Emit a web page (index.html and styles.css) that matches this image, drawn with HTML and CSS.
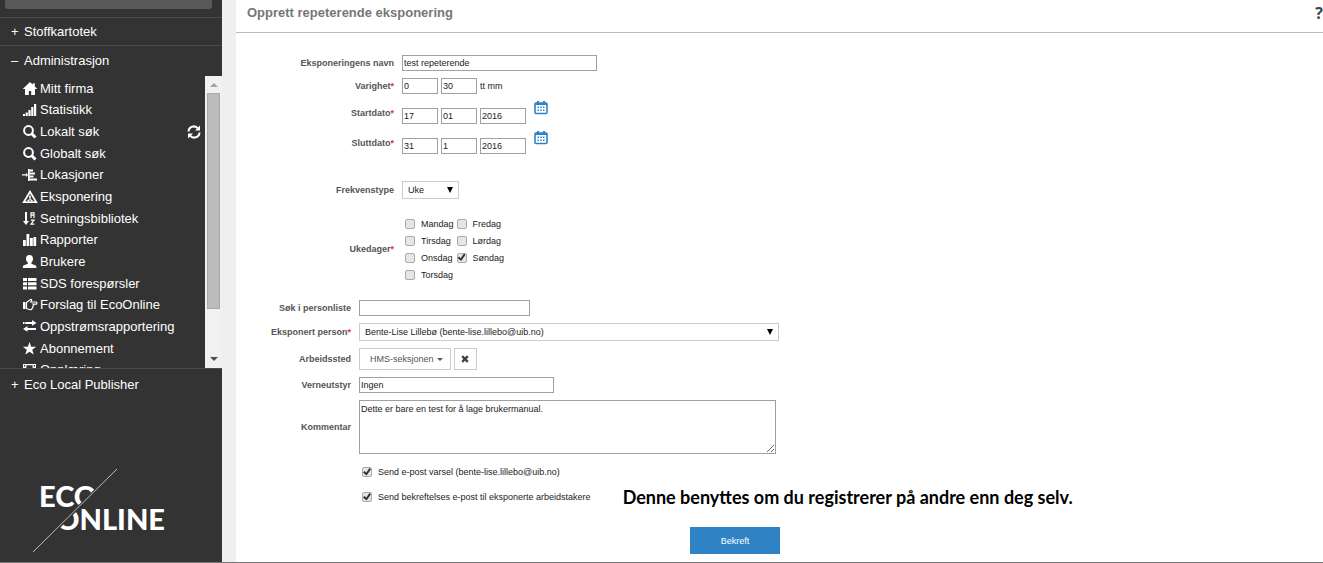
FILE: index.html
```
<!DOCTYPE html>
<html lang="no">
<head>
<meta charset="utf-8">
<title>Opprett repeterende eksponering</title>
<link rel="stylesheet" href="styles.css">
</head>
<body>
<div class="app">
  <aside class="sidebar">
    <div class="search-stub"></div>
    <button class="section" type="button"><span class="sign">+</span>Stoffkartotek</button>
    <button class="section section-open" type="button"><span class="sign">–</span>Administrasjon</button>
    <div class="scroller">
      <ul class="menu">
        <li><a href="#"><svg class="ico" viewBox="0 0 14 14"><path d="M7 0-.3 7H2v6h3.800V9h2.400v4H12V7h2.300L11.800 4.600V1.200H9.800v1.500z"/></svg>Mitt firma</a></li>
        <li><a href="#"><svg class="ico" viewBox="0 0 14 14"><path d="M0 11h2v2H0zM2.600 9.500h2.200V13H2.600zM5.400 7h2.200v6H5.400zM8.200 4h2.200v9H8.200zM11 1h2.200v12H11z"/></svg>Statistikk</a></li>
        <li><a href="#"><svg class="ico" viewBox="0 0 14 14"><path class="line" d="M8.500 8.500 12.500 12.500"/><circle class="ring" cx="5.500" cy="5.500" r="4.400"/></svg>Lokalt søk</a>
          <svg class="ico refresh" viewBox="0 0 14 14"><path class="ring" d="M1.500 6.500a5.300 5.300 0 0 1 9.500-3M12.500 7.500a5.300 5.300 0 0 1-9.500 3"/><path d="M13 .5v5H8zM1 13.500v-5h5z"/></svg></li>
        <li><a href="#"><svg class="ico" viewBox="0 0 14 14"><path class="line" d="M8.500 8.500 12.500 12.500"/><circle class="ring" cx="5.500" cy="5.500" r="4.400"/></svg>Globalt søk</a></li>
        <li><a href="#"><svg class="ico" viewBox="0 0 14 14"><path d="M-1 6.200h4V4.700l2 2.200-2 2.200V7.500h-4zM5 1h1.500v12H5zM6.500 1.500H10v2H6.500zM6.500 4.500H12v2H6.500zM6.500 7.500h4v2h-4zM6.500 10.500H14v2H6.500z"/></svg>Lokasjoner</a></li>
        <li><a href="#"><svg class="ico" viewBox="0 0 14 14"><path fill-rule="evenodd" d="M7 0l7.800 13H-.8zM7 3.400 2.300 11.300h9.400zM6.200 5.500h1.600v3.200H6.200zM3.800 11l2-1.800h2.400l2 1.800H8L7 10l-1 1z"/></svg>Eksponering</a></li>
        <li><a href="#"><svg class="ico" viewBox="0 0 14 14"><path d="M2 0h2v9h2l-3 4-3-4h2z"/><path class="thin" d="M8 6V.8h3V6M8 3.200h3M7.800 8.200H11l-3 4h3.400"/></svg>Setningsbibliotek</a></li>
        <li><a href="#"><svg class="ico" viewBox="0 0 14 14"><path d="M0 7h2.800v6H0zM3.500 1h2.800v12H3.500zM7 5h2.800v8H7zM10.400 4h2.800v9h-2.800z"/></svg>Rapporter</a></li>
        <li><a href="#"><svg class="ico" viewBox="0 0 14 14"><path d="M6.500 0c2.400 0 3.500 1.600 3.500 3.700 0 1.600-.6 2.900-1.600 3.800v1.200l4.300 1.700c.5.300.7.800.7 2.600H-.2c0-1.800.2-2.300.7-2.600l4.300-1.700V7.500C3.700 6.600 3 5.300 3 3.700 3 1.600 4.100 0 6.500 0z"/></svg>Brukere</a></li>
        <li><a href="#"><svg class="ico" viewBox="0 0 14 14"><path d="M0 1h4v3H0zM5 1h8.500v3H5zM0 5.200h4v3H0zM5 5.200h8.500v3H5zM0 9.400h4v3H0zM5 9.400h8.500v3H5z"/></svg>SDS forespørsler</a></li>
        <li><a href="#"><svg class="ico" viewBox="0 0 14 14"><path d="M0 4h2.500v7H0z"/><path class="thin" d="M3.500 4.500 7.500 1.500c1.500-.3 1.500 1 .3 2.500H13c1.200 0 1.200 2.200 0 2.200h-3c1 1 .8 1.800-.3 2.200.4 1 .1 1.700-.7 2 0 1-.5 1.300-1.500 1.300-1.500 0-2.500-.7-4-1.200z"/></svg>Forslag til EcoOnline</a></li>
        <li><a href="#"><svg class="ico" viewBox="0 0 14 14"><path d="M0 1.900h1.500v2H0zM2.200 1.900H9V0l4.500 2.900L9 5.800V3.900H2.200zM13 7.900H4.500V6L0 8.900l4.500 2.900V9.900H13z"/></svg>Oppstrømsrapportering</a></li>
        <li><a href="#"><svg class="ico" viewBox="0 0 14 14"><path d="m6.500 0 1.700 4.700h5L9.200 7.800l1.500 4.800-4.200-2.900-4.200 2.900 1.500-4.800L-.2 4.700h5z"/></svg>Abonnement</a></li>
        <li><a href="#"><svg class="ico" viewBox="0 0 14 14"><path fill-rule="evenodd" d="M0 1h13v11H0zM1 2v1.500h1.200V2zM1 5v1.500h1.200V5zM3.400 2.200v4h6.200v-4zM10.800 2v1.500H12V2zM10.800 5v1.500H12V5zM3.400 7.200v4h6.200v-4z"/></svg>Opplæring</a></li>
      </ul>
      <div class="bar">
        <span class="up"></span>
        <span class="thumb"></span>
        <span class="down"></span>
      </div>
    </div>
    <button class="section section-last" type="button"><span class="sign">+</span>Eco Local Publisher</button>
    <svg class="logo" viewBox="0 0 140 86" role="img" aria-label="EcoOnline">
      <defs>
        <clipPath id="upper"><path d="M0 0H84L0 83z"/></clipPath>
        <clipPath id="lower"><path d="M88 0H140V86H2z"/></clipPath>
      </defs>
      <text x="7" y="39" clip-path="url(#upper)">ECO</text>
      <text x="24" y="62" clip-path="url(#lower)">ONLINE</text>
      <path class="slash" d="M1 84 85 1"/>
    </svg>
  </aside>

  <main class="main">
    <header class="head">
      <h1>Opprett repeterende eksponering</h1>
      <a class="help" href="#">?</a>
    </header>
    <form class="form">
      <div class="row">
        <label class="lab" for="navn">Eksponeringens navn</label>
        <input class="txt name" id="navn" value="test repeterende">
      </div>
      <div class="row">
        <label class="lab" for="timer">Varighet<i>*</i></label>
        <div class="parts">
          <input class="txt short" id="timer" value="0">
          <input class="txt short" aria-label="Minutter" value="30">
          <span>tt mm</span>
        </div>
      </div>
      <div class="row date">
        <label class="lab" for="start">Startdato<i>*</i></label>
        <div class="parts">
          <input class="txt short" id="start" value="17">
          <input class="txt short" aria-label="Startmåned" value="01">
          <input class="txt year" aria-label="Startår" value="2016">
        </div>
        <button class="cal" type="button" aria-label="Velg startdato"><svg viewBox="0 0 14 14"><rect class="frame" x="1" y="2" width="12" height="10.500" rx="1"/><path d="M1 2h12v2H1zM3 0h2v3H3zM9 0h2v3H9zM3.500 5.500H5V7H3.500zM6.300 5.500h1.500V7H6.300zM9 5.500h1.500V7H9zM3.500 8.500H5V10H3.500zM6.300 8.500h1.500V10H6.300zM9 8.500h1.500V10H9z"/></svg></button>
      </div>
      <div class="row date">
        <label class="lab" for="slutt">Sluttdato<i>*</i></label>
        <div class="parts">
          <input class="txt short" id="slutt" value="31">
          <input class="txt short" aria-label="Sluttmåned" value="1">
          <input class="txt year" aria-label="Sluttår" value="2016">
        </div>
        <button class="cal" type="button" aria-label="Velg sluttdato"><svg viewBox="0 0 14 14"><rect class="frame" x="1" y="2" width="12" height="10.500" rx="1"/><path d="M1 2h12v2H1zM3 0h2v3H3zM9 0h2v3H9zM3.500 5.500H5V7H3.500zM6.300 5.500h1.500V7H6.300zM9 5.500h1.500V7H9zM3.500 8.500H5V10H3.500zM6.300 8.500h1.500V10H6.300zM9 8.500h1.500V10H9z"/></svg></button>
      </div>
      <div class="row freq">
        <label class="lab" for="frekvens">Frekvenstype</label>
        <div class="pick pick-small">
          <select id="frekvens"><option>Uke</option></select>
          <svg viewBox="0 0 6 6"><path d="M0 0h6L3 6z"/></svg>
        </div>
      </div>
      <div class="row week">
        <span class="lab" id="dager">Ukedager<i>*</i></span>
        <div class="days" role="group" aria-labelledby="dager">
          <label><input type="checkbox">Mandag</label>
          <label><input type="checkbox">Tirsdag</label>
          <label><input type="checkbox">Onsdag</label>
          <label><input type="checkbox">Torsdag</label>
          <label><input type="checkbox">Fredag</label>
          <label><input type="checkbox">Lørdag</label>
          <label><input type="checkbox" checked>Søndag</label>
        </div>
      </div>

      <div class="details">
        <div class="row">
          <label class="lab" for="sok">Søk i personliste</label>
          <input class="txt search" id="sok">
        </div>
        <div class="row">
          <label class="lab" for="person">Eksponert person<i>*</i></label>
          <div class="pick pick-wide">
            <select id="person"><option>Bente-Lise Lillebø (bente-lise.lillebo@uib.no)</option></select>
            <svg viewBox="0 0 6 6"><path d="M0 0h6L3 6z"/></svg>
          </div>
        </div>
        <div class="row">
          <label class="lab" for="sted">Arbeidssted</label>
          <div class="parts">
            <button class="flat" id="sted" type="button">HMS-seksjonen<span class="caret"></span></button>
            <button class="flat clear" type="button" aria-label="Fjern"><svg viewBox="0 0 8 8"><path d="M1.200 1.200 6.800 6.800M6.800 1.200 1.200 6.800"/></svg></button>
          </div>
        </div>
        <div class="row">
          <label class="lab" for="vern">Verneutstyr</label>
          <input class="txt name" id="vern" value="Ingen">
        </div>
        <div class="row">
          <label class="lab" for="kommentar">Kommentar</label>
          <textarea class="txt area" id="kommentar">Dette er bare en test for å lage brukermanual.</textarea>
        </div>
        <div class="notify">
          <label><input type="checkbox" checked>Send e-post varsel (bente-lise.lillebo@uib.no)</label>
          <div class="with-note">
            <label><input type="checkbox" checked>Send bekreftelses e-post til eksponerte arbeidstakere</label>
            <strong class="note">Denne benyttes om du registrerer på andre enn deg selv.</strong>
          </div>
        </div>
        <button class="submit" type="submit">Bekreft</button>
      </div>
    </form>
  </main>
</div>
</body>
</html>
```

FILE: styles.css
```
* { box-sizing: border-box; }
body {
  margin: 0;
  font-family: "Liberation Sans", Arial, sans-serif;
  font-size: 9px;
  line-height: 12px;
  color: #222;
}
button, input, select, textarea { font: inherit; color: inherit; margin: 0; }
.app {
  display: grid;
  grid-template-columns: 222px 1fr;
  column-gap: 14px;
  min-height: 100vh;
  background: #efefef;
  border-bottom: 1px solid #777;
}

/* Sidebar */
.sidebar { display: flex; flex-direction: column; background: #333; color: #fff; font-size: 13px; }
.search-stub { height: 9px; margin: 0 10px 8px 5px; background: #595959; border-radius: 0 0 3px 3px; }
.section {
  display: flex;
  align-items: center;
  height: 28px;
  padding: 0 11px;
  border: 0;
  border-top: 1px solid #4b4b4b;
  background: none;
  text-align: left;
}
.section-open { height: 31px; }
.section-last { height: 32px; }
.sign { width: 13px; }
.scroller {
  display: grid;
  grid-template: 292px / 1fr 17px;
  overflow: hidden;
}
.menu {
  display: grid;
  grid-auto-rows: 1fr;
  height: 305px;
  margin: 0;
  padding: 2px 4px 0 23px;
  list-style: none;
}
.menu li { display: flex; align-items: center; justify-content: space-between; }
.menu a { display: flex; align-items: center; gap: 3px; color: #fff; text-decoration: none; line-height: 16px; }
.ico { width: 14px; height: 14px; fill: #fff; overflow: visible; }
.ico .line, .ico .ring, .ico .thin { fill: none; stroke: #fff; stroke-width: 2; }
.ico .line { stroke-width: 3; }
.ico .thin { stroke-width: 1.2; }
.bar { display: flex; flex-direction: column; align-items: center; background: #f1f1f1; padding: 7px 0; }
.up, .down { border: 4px solid transparent; }
.up { border-top: 0; border-bottom-color: #a3a3a3; }
.down { border-bottom: 0; border-top-color: #505050; margin-top: auto; }
.thumb { width: 13px; height: 216px; margin-top: 6px; background: #bcbcbc; border: 1px solid #a8a8a8; }
.logo { width: 140px; height: 86px; margin: 68px 0 8px 32px; }
.logo text { font: 900 29px Lato, sans-serif; fill: #fff; }
.slash { stroke: #bbb; stroke-width: 1; }

/* Header */
.main { background: #fff; }
.head {
  display: flex;
  align-items: center;
  justify-content: space-between;
  height: 33px;
  padding: 0 0 7px 11px;
  border-bottom: 1px solid #bbb;
}
.head h1 { margin: 0; font-size: 13px; line-height: 16px; color: #777; }
.help { font: bold 16px "Open Sans", sans-serif; color: #444; text-decoration: none; }

/* Form */
.form { padding: 22px 0 8px; }
.row { display: flex; align-items: center; gap: 8px; margin-bottom: 7px; }
.lab { flex: none; width: 158px; text-align: right; font-weight: bold; color: #555; }
.details .lab { width: 115px; }
.lab i { color: #d33; font-style: normal; }
.txt { height: 16px; padding: 0 1px; border: 1px solid #a0a0a0; background: #fff; }
.name { width: 195px; }
.search { width: 171px; }
.short { width: 36px; }
.year { width: 46px; }
.area { width: 417px; height: 54px; padding: 2px 1px; display: block; }
.parts { display: flex; align-items: center; gap: 3px; }
.date { height: 23px; }
.date .parts { align-self: flex-end; }
.cal { align-self: flex-start; width: 14px; height: 14px; padding: 0; border: 0; background: none; }
.cal svg { display: block; fill: #2f83c5; }
.cal .frame { fill: none; stroke: #2f83c5; stroke-width: 1.600; }
.freq { margin-top: 27px; }
.pick { display: grid; grid-template-columns: 1fr; align-items: center; }
.pick > * { grid-area: 1 / 1; }
.pick select {
  appearance: none;
  width: 100%;
  height: 18px;
  padding: 0 5px;
  border: 1px solid #ccc;
  border-radius: 0;
  background: #fff;
}
.pick svg { width: 6px; height: 6px; margin-right: 6px; justify-self: end; pointer-events: none; fill: #000; }
.pick-small { width: 57px; }
.pick-wide { width: 420px; }
.week { margin: 16px 0 17px; }
.days {
  display: grid;
  grid-template-rows: repeat(4, 17px);
  grid-auto-flow: column;
  column-gap: 3px;
  padding-left: 3px;
}
.days label, .notify label { display: flex; align-items: center; gap: 6px; }
input[type="checkbox"] {
  appearance: none;
  display: grid;
  place-items: center;
  width: 10px;
  height: 10px;
  border: 1px solid #aaa;
  border-radius: 2px;
  background: #e6e6e6;
}
input[type="checkbox"]:checked::after {
  content: "";
  width: 8px;
  height: 8px;
  background: #333;
  clip-path: polygon(0 55%, 20% 38%, 40% 58%, 80% 0, 100% 15%, 45% 95%);
}
.flat {
  display: flex;
  align-items: center;
  gap: 3px;
  height: 22px;
  padding: 0 7px 0 10px;
  border: 1px solid #ccc;
  background: #fff;
  color: #555;
}
.clear { width: 23px; padding: 0; justify-content: center; }
.clear svg { width: 8px; height: 8px; stroke: #444; stroke-width: 2.400; }
.caret { border: 3px solid transparent; border-bottom: 0; border-top-color: #555; }
.notify { padding: 5px 0 0 126px; }
.notify > label { height: 12px; }
.with-note { display: flex; align-items: center; gap: 32px; height: 24px; margin-top: 7px; }
.note { font: bold 18px/24px Lato, sans-serif; color: #000; }
.submit {
  display: block;
  width: 90px;
  height: 27px;
  margin: 18px 0 0 454px;
  border: 0;
  background: #2f83c5;
  color: #fff;
}
```
